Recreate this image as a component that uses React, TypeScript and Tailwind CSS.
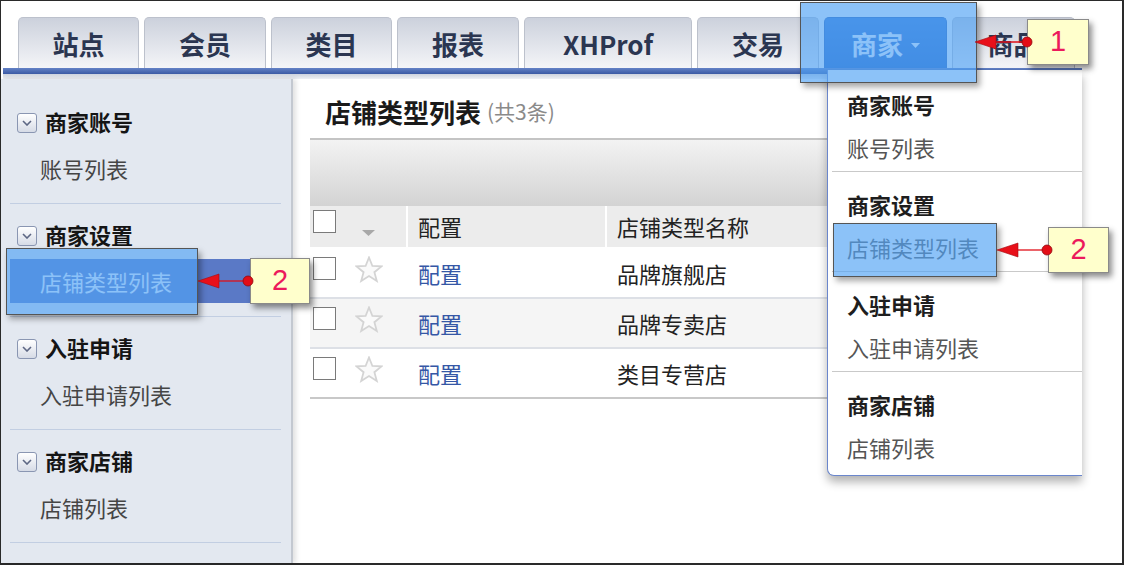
const tabs = [
  { label: '站点', w: 'w-[121px]' },
  { label: '会员', w: 'w-[122px]' },
  { label: '类目', w: 'w-[121px]' },
  { label: '报表', w: 'w-[122px]' },
  { label: 'XHProf', w: 'w-[168px]' },
  { label: '交易', w: 'w-[122px]' },
  { label: '商家', w: 'w-[123px]', active: true },
  { label: '商品', w: 'w-[123px]' },
]

const sections = [
  { title: '商家账号', item: '账号列表' },
  { title: '商家设置', item: '店铺类型列表', active: true },
  { title: '入驻申请', item: '入驻申请列表' },
  { title: '商家店铺', item: '店铺列表' },
]

const rows = ['品牌旗舰店', '品牌专卖店', '类目专营店']

function FoldIcon() {
  return (
    <span className="w-[20px] h-[20px] rounded-[3px] border border-[#8a96b2] bg-linear-to-b from-white to-[#d6dbe6] flex items-center justify-center">
      <svg width="10" height="6" viewBox="0 0 10 6">
        <path d="M1 1 L5 5 L9 1" fill="none" stroke="#5d6784" strokeWidth="1.6" />
      </svg>
    </span>
  )
}

function Checkbox() {
  return <span className="block w-[23px] h-[23px] border border-[#7a7a7a] bg-white" />
}

function Star() {
  return (
    <svg width="28" height="27" viewBox="0 0 28 27">
      <path
        d="M14 1.5 L17.4 10 L26.5 10.4 L19.4 16.2 L21.8 25 L14 20 L6.2 25 L8.6 16.2 L1.5 10.4 L10.6 10 Z"
        fill="#fafafa"
        stroke="#d4d4d4"
        strokeWidth="1.8"
      />
    </svg>
  )
}

function Callout({ n, className }: { n: string; className: string }) {
  return (
    <div
      className={`absolute bg-[#ffffcc] border border-[#8a8a8a] shadow-[3px_4px_6px_rgba(0,0,0,0.45)] flex items-center justify-center text-[29px] text-[#ec1a5c] font-['Liberation_Sans',sans-serif] ${className}`}
    >
      {n}
    </div>
  )
}

function Arrow({ tip, dot, y }: { tip: number; dot: number; y: number }) {
  return (
    <g>
      <line x1={tip + 18} y1={y} x2={dot} y2={y} stroke="#e0101a" strokeWidth="1.3" />
      <polygon points={`${tip},${y} ${tip + 21},${y - 7} ${tip + 21},${y + 7}`} fill="#e8101a" stroke="#a30c12" strokeWidth="0.6" />
      <circle cx={dot} cy={y} r="5" fill="#e30d16" stroke="#8f0a0e" strokeWidth="0.8" />
    </g>
  )
}

export default function App() {
  return (
    <div className="relative w-[1125px] h-[565px] bg-white overflow-hidden font-['Noto_Sans_CJK_SC',sans-serif]">
      {/* framed screenshot */}
      <div className="w-[1124px] h-[565px] border-t border-l border-r-2 border-b-2 border-[#2a2a2a] bg-white">
        <div className="w-[1081px]">
          {/* top nav */}
          <div className="flex gap-[5px] pl-[17px] pt-[16px]">
            {tabs.map((t) => (
              <div
                key={t.label}
                className={`${t.w} h-[51px] rounded-t-[5px] border border-b-0 flex items-center justify-center text-[26px] font-bold ${
                  t.active
                    ? 'border-[#2a62b8] bg-linear-to-b from-[#3a7ad6] to-[#2665c4] text-white'
                    : 'border-[#bcc1cc] bg-linear-to-b from-[#ccd1dc] to-[#f4f5f8] text-[#2b3651]'
                }`}
              >
                {t.label}
                {t.active && (
                  <svg className="ml-[8px] mt-[4px]" width="9" height="5" viewBox="0 0 9 5">
                    <path d="M0 0 L9 0 L4.5 5 Z" fill="white" />
                  </svg>
                )}
              </div>
            ))}
          </div>
          <div className="h-[6px] ml-[2px] bg-linear-to-b from-[#6482c6] to-[#3b5aa4]" />
          <div className="h-[5px] ml-[2px] bg-linear-to-b from-[#cdd3de] to-[#eef0f4]" />

          {/* body */}
          <div className="flex h-[484px]">
            <div className="w-[292px] shrink-0 bg-[#e3e8f0] border-r-2 border-[#c3c8d0] shadow-[3px_0_5px_rgba(0,0,0,0.12)] pt-[12px]">
              {sections.map((s) => (
                <div key={s.title} className="pt-[12px]">
                  <div className="h-[40px] flex items-center pl-[16px] gap-[8px]">
                    <FoldIcon />
                    <span className="text-[22px] font-bold text-[#151515] mt-[-3px]">{s.title}</span>
                  </div>
                  <div
                    className={`mt-[3px] h-[44px] ml-[9px] pl-[30px] flex items-center text-[22px] ${
                      s.active ? 'bg-[#5a79c6] text-white' : 'text-[#454545]'
                    }`}
                  >
                    {s.item}
                  </div>
                  <div className="mt-[13px] ml-[9px] mr-[10px] h-px bg-[#c2cee2]" />
                </div>
              ))}
            </div>

            <div className="flex-1 pl-[17px]">
              <div className="pl-[15px] pt-[6px] h-[59px] flex items-center">
                <span className="text-[26px] font-bold text-[#1a1a1a]">店铺类型列表</span>
                <span className="ml-[6px] text-[21px] text-[#8a8a8a]">(共3条)</span>
              </div>
              <div className="h-[68px] border-t-2 border-[#c4c4c4] bg-linear-to-b from-[#f3f3f3] to-[#d3d3d3]" />
              <div className="h-[41px] flex bg-[#ececec] text-[22px] text-[#222]">
                <div className="w-[96px] flex items-start pt-[4px] pl-[3px]">
                  <Checkbox />
                  <svg className="ml-[26px] mt-[20px]" width="13" height="6" viewBox="0 0 13 6">
                    <path d="M0 0 L13 0 L6.5 6 Z" fill="#a8a8a8" />
                  </svg>
                </div>
                <div className="w-[199px] border-l-2 border-white pl-[10px] flex items-center">配置</div>
                <div className="flex-1 border-l-2 border-white pl-[10px] flex items-center">店铺类型名称</div>
              </div>
              {rows.map((r, i) => (
                <div
                  key={r}
                  className={`h-[50px] flex border-t-2 ${i === 0 ? 'border-white' : 'border-[#dde0e6]'} ${
                    i === 1 ? 'bg-[#f5f5f5]' : 'bg-white'
                  } text-[22px]`}
                >
                  <div className="w-[96px] flex items-start pt-[8px] pl-[3px]">
                    <Checkbox />
                    <span className="ml-[19px] mt-[-1px]">
                      <Star />
                    </span>
                  </div>
                  <div className="w-[199px] pl-[12px] flex items-center text-[#3557a6]">配置</div>
                  <div className="flex-1 pl-[12px] flex items-center text-[#222]">{r}</div>
                </div>
              ))}
              <div className="h-[2px] bg-[#c8c8c8]" />
            </div>
          </div>
        </div>
      </div>

      {/* dropdown menu */}
      <div className="absolute left-[827px] top-[70px] w-[255px] h-[406px] bg-white border-l border-b border-[#6a86cc] rounded-bl-[7px] shadow-[0_6px_10px_rgba(0,0,0,0.3)] pt-[2px]">
        {sections.map((s, i) => (
          <div key={s.title} className="pt-[12px]">
            <div className="h-[40px] pl-[19px] flex items-center text-[22px] font-bold text-[#1e1e1e]">{s.title}</div>
            <div className="mt-[3px] h-[40px] pl-[19px] flex items-center text-[22px] text-[#555]">{s.item}</div>
            {i < sections.length - 1 && <div className="mt-[4px] ml-[4px] h-px bg-[#c9c9c9]" />}
          </div>
        ))}
      </div>

      {/* highlight overlays */}
      <div className="absolute left-[800px] top-[2px] w-[177px] h-[81px] bg-[rgba(80,162,245,0.66)] border border-[#555] shadow-[3px_4px_6px_rgba(0,0,0,0.35)]" />
      <div className="absolute left-[6px] top-[248px] w-[192px] h-[67px] bg-[rgba(80,162,245,0.66)] border border-[#555] shadow-[3px_4px_6px_rgba(0,0,0,0.35)]" />
      <div className="absolute left-[833px] top-[223px] w-[164px] h-[54px] bg-[rgba(80,162,245,0.66)] border border-[#555] shadow-[3px_4px_6px_rgba(0,0,0,0.35)]" />

      {/* callouts */}
      <Callout n="1" className="left-[1027px] top-[19px] w-[62px] h-[46px]" />
      <Callout n="2" className="left-[250px] top-[258px] w-[60px] h-[46px]" />
      <Callout n="2" className="left-[1048px] top-[227px] w-[61px] h-[46px]" />

      <svg className="absolute inset-0 pointer-events-none" width="1125" height="565">
        <Arrow tip={975} dot={1027} y={42} />
        <Arrow tip={198} dot={248} y={281} />
        <Arrow tip={997} dot={1047} y={250} />
      </svg>
    </div>
  )
}
